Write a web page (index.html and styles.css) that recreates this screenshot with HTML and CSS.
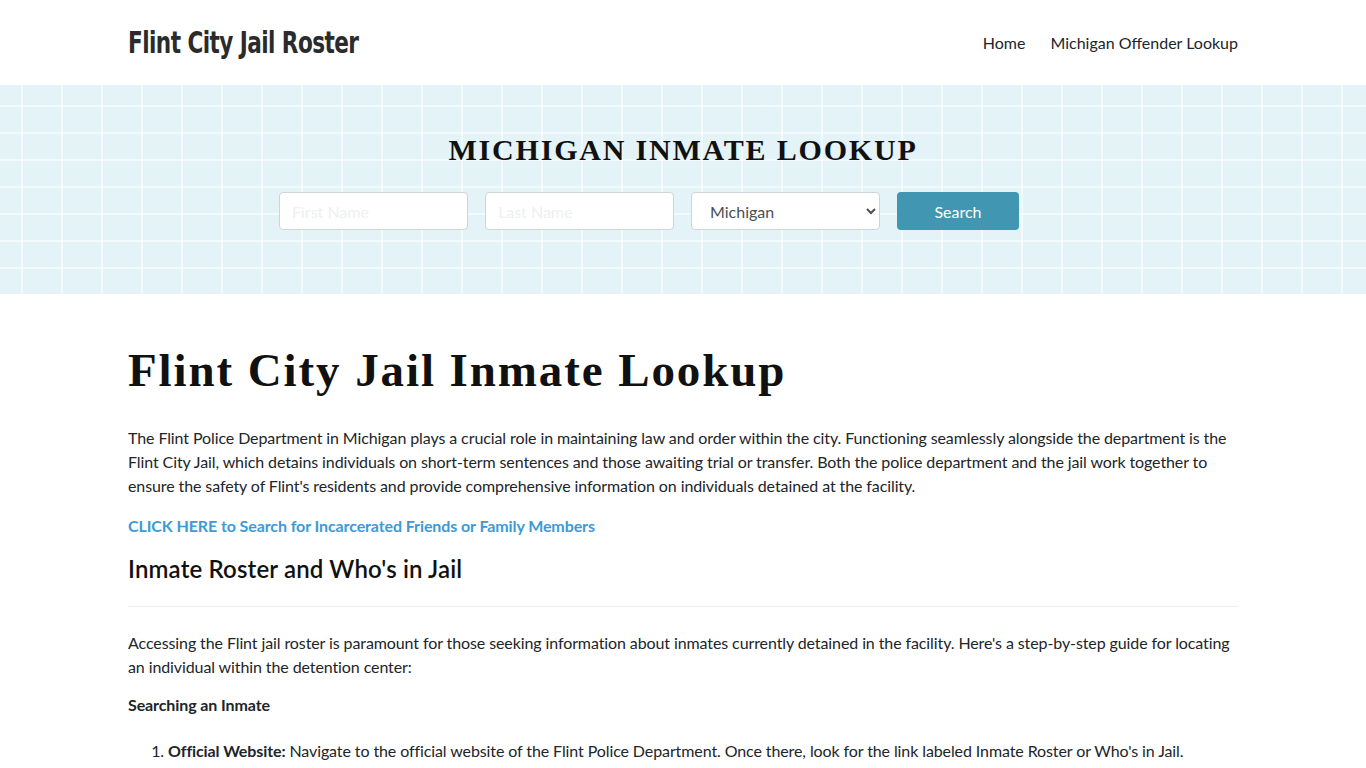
FILE: index.html
```html
<!DOCTYPE html>
<html lang="en">
<head>
<meta charset="utf-8">
<title>Flint City Jail Roster</title>
<link rel="stylesheet" href="styles.css">
</head>
<body>
<header class="site-header">
  <div class="container header-row">
    <a class="brand" href="#">Flint City Jail Roster</a>
    <nav class="nav">
      <a href="#">Home</a>
      <a href="#">Michigan Offender Lookup</a>
    </nav>
  </div>
</header>

<section class="hero">
  <h2 class="hero-title">MICHIGAN INMATE LOOKUP</h2>
  <form class="search-form">
    <input class="field" type="text" placeholder="First Name">
    <input class="field" type="text" placeholder="Last Name">
    <select class="field select">
      <option>Michigan</option>
    </select>
    <button class="btn" type="button">Search</button>
  </form>
</section>

<main class="container content">
  <h1 class="page-title">Flint City Jail Inmate Lookup</h1>
  <p>The Flint Police Department in Michigan plays a crucial role in maintaining law and order within the city. Functioning seamlessly alongside the department is the Flint City Jail, which detains individuals on short-term sentences and those awaiting trial or transfer. Both the police department and the jail work together to ensure the safety of Flint's residents and provide comprehensive information on individuals detained at the facility.</p>
  <p><a class="cta" href="#">CLICK HERE to Search for Incarcerated Friends or Family Members</a></p>
  <h2 class="section-title">Inmate Roster and Who's in Jail</h2>
  <hr class="divider">
  <p>Accessing the Flint jail roster is paramount for those seeking information about inmates currently detained in the facility. Here's a step-by-step guide for locating an individual within the detention center:</p>
  <p class="sub"><strong>Searching an Inmate</strong></p>
  <ol class="steps">
    <li><strong>Official Website:</strong> Navigate to the official website of the Flint Police Department. Once there, look for the link labeled Inmate Roster or Who's in Jail.</li>
  </ol>
</main>
</body>
</html>
```

FILE: styles.css
```css
* { box-sizing: border-box; }

body {
  margin: 0;
  font-family: Lato, "Open Sans", sans-serif;
  font-size: 16px;
  line-height: 1.5;
  color: #212529;
  background: #fff;
}

a { text-decoration: none; }

.container {
  width: 1110px;
  margin: 0 auto;
}

/* Top bar */
.site-header { height: 85px; }

.header-row {
  height: 85px;
  display: flex;
  align-items: center;
  justify-content: space-between;
}

.brand {
  display: inline-block;
  font-family: "DejaVu Sans", sans-serif;
  font-stretch: condensed;
  font-weight: 700;
  font-size: 30px;
  letter-spacing: -0.7px;
  color: #2b2b2b;
  transform: scaleX(0.8);
  transform-origin: left center;
}

.nav {
  display: flex;
  gap: 25px;
}

.nav a {
  color: #212529;
  font-size: 16px;
}

/* Search banner with a light grid */
.hero {
  height: 209px;
  background-color: #e4f3f8;
  background-image:
    repeating-linear-gradient(90deg, transparent 0 21px, rgba(255,255,255,0.55) 21px 23px, transparent 23px 40px),
    repeating-linear-gradient(0deg, transparent 0 25px, rgba(255,255,255,0.55) 25px 27px, transparent 27px 27px);
  display: flex;
  flex-direction: column;
  align-items: center;
  padding-top: 47px;
}

.hero-title {
  margin: 0 0 24px;
  font-family: "Liberation Serif", serif;
  font-weight: 700;
  font-size: 30px;
  line-height: 36px;
  letter-spacing: 1.8px;
  color: #111;
}

.search-form {
  display: flex;
  gap: 17px;
  margin-right: 68px;
}

.field {
  width: 189px;
  height: 38px;
  padding: 6px 12px;
  border: 1px solid #ced4da;
  border-radius: 4px;
  background: #fff;
  font-family: Lato, sans-serif;
  font-size: 16px;
  color: #495057;
}

.field::placeholder { color: #eef0f2; }

.select { padding-left: 14px; }

.btn {
  width: 122px;
  height: 38px;
  border: 0;
  border-radius: 4px;
  background: #4197b1;
  color: #fff;
  font-family: Lato, sans-serif;
  font-size: 16px;
}

/* Article */
.content {
  padding-top: 48px;
  letter-spacing: -0.1px;
}

.page-title {
  margin: 0 0 28px;
  font-family: "Liberation Serif", serif;
  font-weight: 700;
  font-size: 47px;
  line-height: 56px;
  letter-spacing: 1.9px;
  color: #111;
}

.content p { margin: 0 0 16px; }

.cta {
  color: #3d9ad6;
  font-weight: 700;
}

.section-title {
  margin: 0;
  font-size: 24px;
  line-height: 30px;
  font-weight: 600;
  letter-spacing: 0.15px;
  color: #111;
}

.divider {
  margin: 22px 0 24px;
  border: 0;
  border-top: 1px solid #eee;
}

.content p.sub {
  margin-top: -2px;
  margin-bottom: 22px;
}

.steps {
  margin: 0;
  padding-left: 40px;
}
```
